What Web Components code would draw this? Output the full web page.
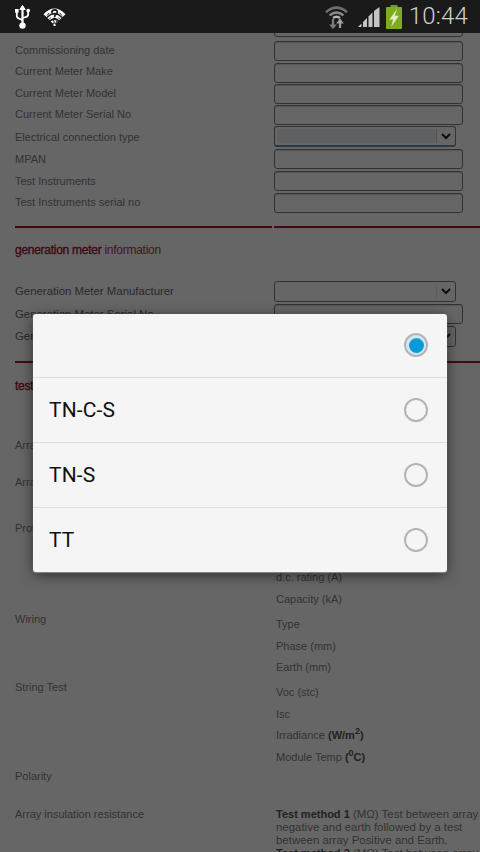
<!doctype html>
<html>
<head>
<meta charset="utf-8">
<title>Meter form</title>
<style>
  html, body { margin: 0; height: 100%; }
  body { width: 480px; height: 852px; overflow: hidden; background: #fff; position: relative; font-family: "Liberation Sans", Arial, sans-serif; }
  main { display: block; height: 819px; overflow: hidden; color: #7f7f7f; }
  .first { margin-top: -16px; }
  b { color: #555; font-weight: bold; }
  sup { font-size: 9px; line-height: 0; }
</style>
</head>
<body>

<status-bar></status-bar>

<main>
  <form-row class="first" style="height:24px"><text-field slot="control"></text-field></form-row>
  <form-row style="height:22px;--lh:19px">Commissioning date<text-field slot="control"></text-field></form-row>
  <form-row style="height:21px;--lh:17px">Current Meter Make<text-field slot="control"></text-field></form-row>
  <form-row style="height:21px;--lh:18px">Current Meter Model<text-field slot="control"></text-field></form-row>
  <form-row style="height:21px;--lh:19px">Current Meter Serial No<text-field slot="control"></text-field></form-row>
  <form-row style="height:23px;--lh:22px">Electrical connection type<select-field slot="control" focused></select-field></form-row>
  <form-row style="height:22px">MPAN<text-field slot="control"></text-field></form-row>
  <form-row style="height:22px">Test Instruments<text-field slot="control"></text-field></form-row>
  <form-row style="height:22px;--lh:18px">Test Instruments serial no<text-field slot="control"></text-field></form-row>

  <section-rule split style="margin-top:11px"></section-rule>
  <section-title style="margin-top:12px"><strong>generation meter</strong> information</section-title>

  <form-row dark style="height:23px;margin-top:21px">Generation Meter Manufacturer<select-field slot="control"></select-field></form-row>
  <form-row dark style="height:22px">Generation Meter Serial No<text-field slot="control"></text-field></form-row>
  <form-row dark style="height:22px">Generation Meter Type<select-field slot="control"></select-field></form-row>

  <section-rule style="margin-top:13px"></section-rule>
  <section-title style="margin-top:13px"><strong>test</strong></section-title>

  <form-group label="Array" style="margin-top:39px;height:37px"></form-group>
  <form-group label="Array" style="height:46px"></form-group>
  <form-group label="Protection" style="height:91px">
    <value-line style="margin-top:44px">d.c. rating (A)</value-line>
    <value-line>Capacity (kA)</value-line>
  </form-group>
  <form-group label="Wiring" style="height:68px">
    <value-line>Type</value-line>
    <value-line>Phase (mm)</value-line>
    <value-line>Earth (mm)</value-line>
  </form-group>
  <form-group label="String Test" style="height:89px">
    <value-line>Voc (stc)</value-line>
    <value-line>Isc</value-line>
    <value-line>Irradiance <b>(W/m<sup>2</sup>)</b></value-line>
    <value-line>Module Temp <b>(<sup>0</sup>C)</b></value-line>
  </form-group>
  <form-group label="Polarity" style="height:38px"></form-group>
  <form-group label="Array insulation resistance" flush>
    <method-note><strong>Test method 1</strong> (MΩ) Test between array negative and earth followed by a test between array Positive and Earth.</method-note>
    <method-note><strong>Test method 2</strong> (MΩ) Test between array</method-note>
  </form-group>
</main>

<dim-scrim></dim-scrim>

<radio-dialog>
  <radio-option checked></radio-option>
  <radio-option>TN-C-S</radio-option>
  <radio-option>TN-S</radio-option>
  <radio-option>TT</radio-option>
</radio-dialog>

<script>
class StatusBar extends HTMLElement {
    constructor() {
        super()
        const shadow = this.attachShadow({ mode: 'open' })
        shadow.innerHTML = `
        <style>
            :host { display:flex; align-items:center; height:33px; background:#1a1a1a; box-sizing:border-box; padding:0 12px 0 15px; }
            svg { display:block; flex:none; }
            .usb { margin-right:13px; }
            .spacer { flex:1; }
            .sync { margin-right:10px; }
            .signal { margin-right:6px; }
            .battery { margin-right:7px; }
            .time { font:300 24px/33px Roboto, "Liberation Sans", sans-serif; color:#d0d0d0; letter-spacing:.2px; }
        </style>
        <svg class="usb" width="15" height="24" viewBox="0 0 15 24" fill="none" stroke="#fff">
            <path d="M7.5 3V20" stroke-width="2.2"/>
            <path d="M7.5 0.5L4.8 4.5H10.2Z" fill="#fff" stroke-width="1"/>
            <path d="M1.8 7V10.5Q1.8 13 4.2 13.6L7.5 15" stroke-width="1.8"/>
            <path d="M13.2 7V9Q13.2 11.5 10.8 12L7.5 13" stroke-width="1.8"/>
            <rect x="0" y="4" width="3.6" height="3.6" fill="#fff" stroke="none"/>
            <circle cx="13.2" cy="5.6" r="1.9" fill="#fff" stroke="none"/>
            <circle cx="7.5" cy="20.6" r="3.2" fill="#fff" stroke="none"/>
        </svg>
        <svg width="23" height="18" viewBox="0 0 23 18" fill="none" stroke="#fff">
            <path d="M2 7.6Q11.5 -2.4 21 7.6" stroke-width="4.2"/>
            <path d="M5.6 11.2Q11.5 5.2 17.4 11.2" stroke-width="3.2"/>
            <path d="M8.6 14.4Q11.5 12 14.4 14.4" stroke-width="2.4" stroke-dasharray="2 1"/>
            <path d="M11.5 18V15.6" stroke-width="2"/>
            <path d="M6.4 4.8L4 7.6M16.6 4.8L19 7.6M7.6 9.6L6.2 11.4M15.4 9.6L16.8 11.4" stroke="#1a1a1a" stroke-width="1"/>
            <path d="M8.7 4.8Q9 1.8 11.7 1.9Q14.6 2 14.2 4.6Q13.9 6.2 12.3 6.9Q11.6 7.4 11.6 9.2" stroke="#1a1a1a" stroke-width="1.8"/>
            <path d="M11.6 10.2V12" stroke="#1a1a1a" stroke-width="1.9"/>
        </svg>
        <span class="spacer"></span>
        <svg class="sync" width="23" height="24" viewBox="0 0 23 24" fill="none">
            <path d="M1 7.2Q11.5 -1.8 22 7.2" stroke-width="2.6" stroke="#6e6e6e"/>
            <path d="M4.6 10.4Q11.5 4.6 18.4 10.4" stroke-width="2.4" stroke="#8c8c8c"/>
            <path d="M8 13Q11.5 10.4 15 13" stroke-width="2.4" stroke="#b4b4b4"/>
            <path d="M8 14V23" stroke-width="2.2" stroke="#7c7c7c"/>
            <path d="M4.2 19.4L8 24L11.8 19.4Z" fill="#7c7c7c"/>
            <path d="M15 14V23" stroke-width="2.2" stroke="#a0a0a0"/>
            <path d="M11.2 18.4L15 13.6L18.8 18.4Z" fill="#a0a0a0"/>
        </svg>
        <svg class="signal" width="22" height="20" viewBox="0 0 22 20" fill="#c4c4c4">
            <path d="M0 20L3.5 16.6V20Z"/>
            <path d="M5 15V20H9V11Z"/>
            <path d="M10.5 9.6V20H14.5V5.6Z"/>
            <path d="M16 4V20H21.5V0Z"/>
        </svg>
        <svg class="battery" width="16" height="24" viewBox="0 0 16 24">
            <rect x="4.5" y="0" width="7" height="2.5" fill="#6f9a1c"/>
            <rect x="0" y="2" width="16" height="22" rx="1" fill="#7dac1f"/>
            <path d="M11 4L3.4 14.4H7.2L5.2 22L12.8 10.8H8.8Z" fill="#e3edc6"/>
        </svg>
        <span class="time">10:44</span>
        `
    }
}

class FormRow extends HTMLElement {
    constructor() {
        super()
        const shadow = this.attachShadow({ mode: 'open' })
        shadow.innerHTML = `
        <style>
            :host { display:grid; grid-template-columns:259px 1fr; box-sizing:border-box; padding-left:15px; font-size:11px; line-height:var(--lh, 20px); color:#7f7f7f; }
            :host([dark]) { color:#6a6a6a; font-size:11.4px; }
            .label { white-space:nowrap; }
        </style>
        <div class="label"><slot></slot></div>
        <div><slot name="control"></slot></div>
        `
    }
}

class TextField extends HTMLElement {
    constructor() {
        super()
        const shadow = this.attachShadow({ mode: 'open' })
        shadow.innerHTML = `
        <style>
            :host { display:block; width:189px; height:20px; box-sizing:border-box; border:1px solid #7d7d7d; border-radius:3px; background:#fff; box-shadow:inset 0 1px 1px #d8d8d8; }
        </style>
        `
    }
}

class SelectField extends HTMLElement {
    constructor() {
        super()
        const shadow = this.attachShadow({ mode: 'open' })
        shadow.innerHTML = `
        <style>
            :host { display:flex; width:182px; height:21px; box-sizing:border-box; border:1px solid #7d7d7d; border-radius:3px; background:#fff; }
            :host([focused]) { border-bottom:2px solid #6f8fa8; }
            .value { flex:1; margin:2px 0 2px 2px; border-right:1px solid #e6e6e6; }
            :host([focused]) .value { background:#ecf1f6; border-right-color:#cdd6de; }
            .arrow { width:18px; display:flex; align-items:center; justify-content:center; }
            svg { display:block; }
        </style>
        <div class="value"></div>
        <div class="arrow">
            <svg width="10" height="7" viewBox="0 0 10 7" fill="none" stroke="#222" stroke-width="2"><path d="M1 1L5 5L9 1"/></svg>
        </div>
        `
    }
}

class SectionRule extends HTMLElement {
    constructor() {
        super()
        const shadow = this.attachShadow({ mode: 'open' })
        shadow.innerHTML = `
        <style>
            :host { display:flex; height:2px; padding-left:15px; }
            div { background:#b0152e; height:2px; }
            .left { flex:1; }
            :host([split]) .left { flex:none; width:257px; margin-right:2px; }
            :host([split]) .right { flex:1; }
        </style>
        <div class="left"></div><div class="right"></div>
        `
    }
}

class SectionTitle extends HTMLElement {
    constructor() {
        super()
        const shadow = this.attachShadow({ mode: 'open' })
        shadow.innerHTML = `
        <style>
            :host { display:block; padding-left:15px; font-size:12px; line-height:20px; letter-spacing:-.27px; color:#a03a4a; white-space:nowrap; }
            ::slotted(strong) { color:#9a1028; font-weight:normal; -webkit-text-stroke:.3px #9a1028; }
        </style>
        <slot></slot>
        `
    }
}

class FormGroup extends HTMLElement {
    constructor() {
        super()
        const shadow = this.attachShadow({ mode: 'open' })
        shadow.innerHTML = `
        <style>
            :host { display:grid; grid-template-columns:261px 1fr; box-sizing:border-box; padding-left:15px; font-size:11px; color:#7f7f7f; }
            .label { line-height:20px; white-space:nowrap; }
            .values { padding-top:5px; }
            :host([flush]) .values { padding-top:4px; }
        </style>
        <div class="label"></div>
        <div class="values"><slot></slot></div>
        `
        shadow.querySelector('.label').textContent = this.getAttribute('label')
    }
}

class ValueLine extends HTMLElement {
    constructor() {
        super()
        const shadow = this.attachShadow({ mode: 'open' })
        shadow.innerHTML = `
        <style>
            :host { display:block; height:21.6px; line-height:20px; font-size:11px; white-space:nowrap; }
        </style>
        <slot></slot>
        `
    }
}

class MethodNote extends HTMLElement {
    constructor() {
        super()
        const shadow = this.attachShadow({ mode: 'open' })
        shadow.innerHTML = `
        <style>
            :host { display:block; font-size:11.45px; line-height:13px; }
            ::slotted(strong) { color:#555; font-size:11px; }
        </style>
        <slot></slot>
        `
    }
}

class DimScrim extends HTMLElement {
    constructor() {
        super()
        const shadow = this.attachShadow({ mode: 'open' })
        shadow.innerHTML = `
        <style>
            :host { display:block; position:absolute; left:0; right:0; top:33px; bottom:0; background:rgba(0,0,0,.6); }
        </style>
        `
    }
}

class RadioDialog extends HTMLElement {
    constructor() {
        super()
        const shadow = this.attachShadow({ mode: 'open' })
        shadow.innerHTML = `
        <style>
            :host { display:grid; grid-template-rows:63px 65px 65px 65px; position:absolute; left:33px; top:314px; width:414px; height:258px; background:#f5f5f5; border-radius:3px; box-shadow:0 1px 1px #8a8a8a, 0 3px 14px rgba(0,0,0,.55); overflow:hidden; }
        </style>
        <slot></slot>
        `
    }
}

class RadioOption extends HTMLElement {
    constructor() {
        super()
        const shadow = this.attachShadow({ mode: 'open' })
        shadow.innerHTML = `
        <style>
            :host { display:flex; align-items:center; justify-content:space-between; box-sizing:border-box; padding:0 19px 0 16px; font:21px Roboto, "Liberation Sans", sans-serif; letter-spacing:.15px; color:#111; border-top:1px solid #dedede; }
            :host(:first-child) { border-top:0; padding-bottom:1px; }
            .ring { width:24px; height:24px; box-sizing:border-box; border:2px solid #b4b4b4; border-radius:50%; display:flex; align-items:center; justify-content:center; }
            :host([checked]) .ring { background:#cfe9f5; }
            .dot { display:none; width:15px; height:15px; border-radius:50%; background:radial-gradient(circle at 50% 65%, #0a9ad8 60%, #4cb3dd); }
            :host([checked]) .dot { display:block; }
        </style>
        <span><slot></slot></span>
        <div class="ring"><div class="dot"></div></div>
        `
    }
}

window.customElements.define('status-bar', StatusBar)
window.customElements.define('form-row', FormRow)
window.customElements.define('text-field', TextField)
window.customElements.define('select-field', SelectField)
window.customElements.define('section-rule', SectionRule)
window.customElements.define('section-title', SectionTitle)
window.customElements.define('form-group', FormGroup)
window.customElements.define('value-line', ValueLine)
window.customElements.define('method-note', MethodNote)
window.customElements.define('dim-scrim', DimScrim)
window.customElements.define('radio-dialog', RadioDialog)
window.customElements.define('radio-option', RadioOption)
</script>
</body>
</html>
